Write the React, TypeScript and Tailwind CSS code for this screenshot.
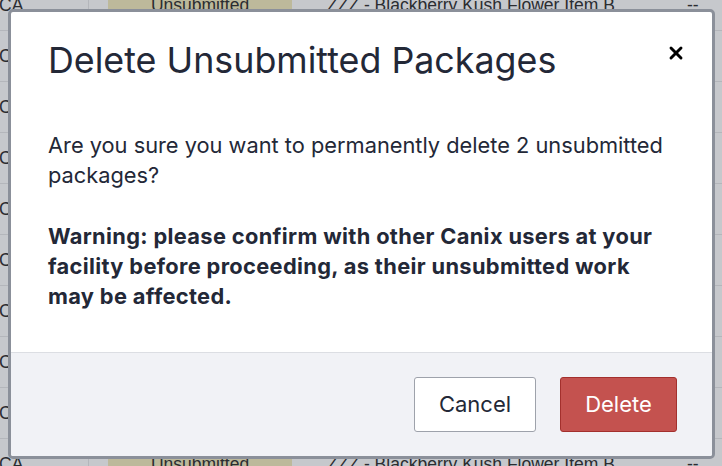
import { X } from "lucide-react";

const rows = Array.from({ length: 10 }, (_, i) => i);

function TableRow() {
  return (
    <div className="flex h-[51px] shrink-0 items-center border-b border-[#b4b6bb] text-[17.5px] text-[#2b2d31]">
      <div className="flex h-full w-[90px] shrink-0 items-center border-r border-[#b4b6bb] -ml-[1px]">
        CA
      </div>
      <div className="ml-[19px] flex h-full w-[184px] shrink-0 items-center justify-center bg-[#bdb99b]">
        Unsubmitted
      </div>
      <div className="ml-[35px] w-[330px] shrink-0 whitespace-nowrap">
        ZZZ - Blackberry Kush Flower Item B
      </div>
      <div className="ml-[30px] w-[30px] shrink-0">--</div>
    </div>
  );
}

export default function App() {
  return (
    <div
      className="relative h-[466px] w-[722px] overflow-hidden bg-[#c6c8cc]"
      style={{ fontFamily: "Inter, 'Noto Sans', sans-serif" }}
    >
      {/* table behind the overlay */}
      <div className="-mt-[20px] flex flex-col" style={{ fontFamily: "'Liberation Sans', Arial, sans-serif" }}>
        {rows.map((r) => (
          <TableRow key={r} />
        ))}
      </div>

      {/* modal */}
      <div className="absolute left-[8px] top-[9px] flex h-[450px] w-[707px] flex-col overflow-hidden rounded-[5px] border-[3px] border-[#8b909a] bg-white text-[#232837]">
        <button className="absolute right-[26px] top-[31px] text-black">
          <X className="h-[20px] w-[20px]" strokeWidth={3.5} />
        </button>
        <div className="flex h-[95px] shrink-0 items-center px-[37px]">
          <h2 className="text-[35.8px] leading-[42px] font-normal">
            Delete Unsubmitted Packages
          </h2>
        </div>
        <div className="flex-1 px-[37px] pt-[23px] text-[21.8px] leading-[30px]">
          <p className="mb-[31px]">
            Are you sure you want to permanently delete 2 unsubmitted packages?
          </p>
          <p className="font-bold tracking-[0.35px]">
            Warning: please confirm with other Canix users at your facility before proceeding, as their unsubmitted work may be affected.
          </p>
        </div>
        <div className="flex h-[104px] shrink-0 items-center justify-end gap-[24px] border-t border-[#dcdee3] bg-[#f1f2f6] pr-[35px]">
          <button className="h-[55px] w-[122px] rounded-[3px] border border-[#9ea2ab] bg-white text-[22px] text-[#232837]">
            Cancel
          </button>
          <button className="h-[55px] w-[117px] rounded-[3px] border border-[#a3302d] bg-[#c4524f] text-[22px] text-white">
            Delete
          </button>
        </div>
      </div>
    </div>
  );
}
